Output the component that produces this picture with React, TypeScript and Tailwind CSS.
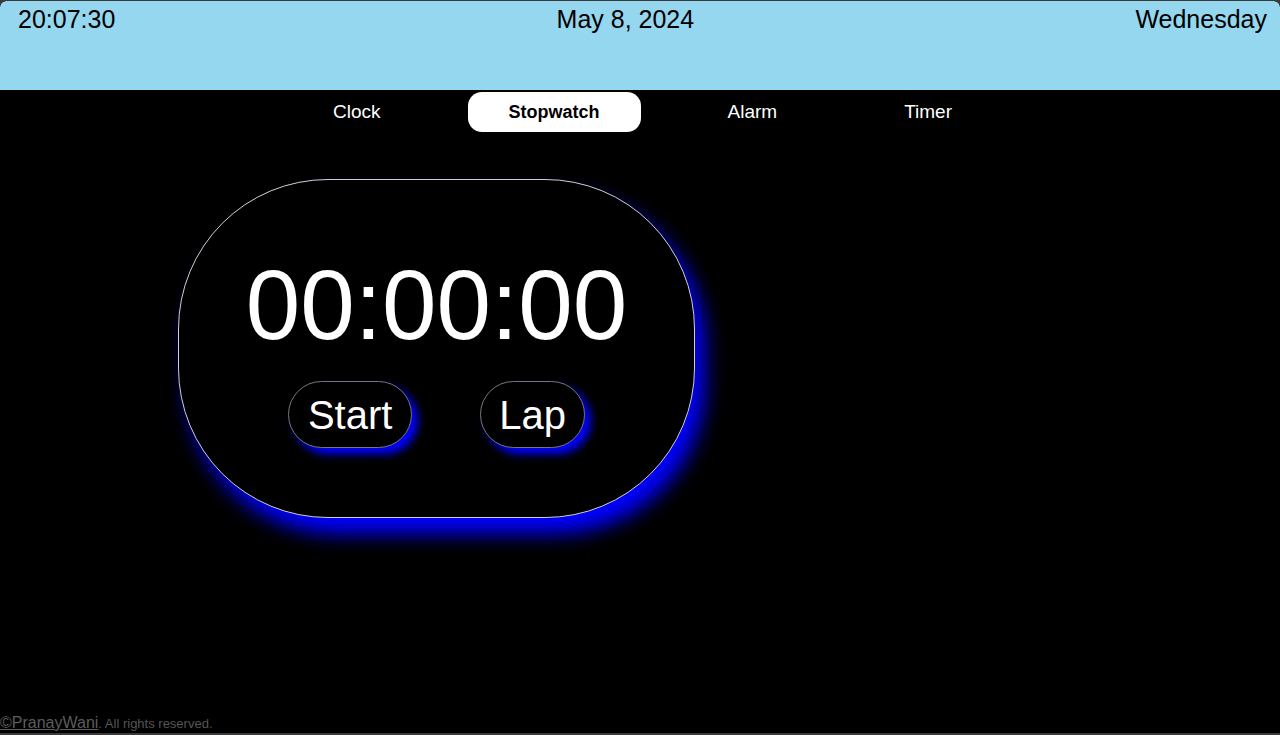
import React from 'react';

const tabs = ['Clock', 'Stopwatch', 'Alarm', 'Timer'];

export default function App() {
  const active = 'Stopwatch';

  return (
    <div className="h-[735px] bg-[#3a3a3a] pt-px font-['Liberation_Sans',Arial,sans-serif] overflow-hidden">
      <div className="h-[732px] bg-black flex flex-col rounded-t-[6px] overflow-hidden">
        {/* top bar */}
        <header className="h-[89px] shrink-0 bg-[#94d7ef] rounded-t-[6px] flex justify-between pl-[18px] pr-[13px] pt-[3px] text-[25px] text-black leading-[30px]">
          <span>20:07:30</span>
          <span>May 8, 2024</span>
          <span>Wednesday</span>
        </header>

        {/* tabs */}
        <nav className="flex justify-center gap-[47px] mt-[2px] ml-[5px]">
          {tabs.map((tab) =>
            tab === active ? (
              <div
                key={tab}
                className="h-[40px] px-[41px] rounded-[14px] bg-white text-black font-bold text-[18px] flex items-center"
              >
                {tab}
              </div>
            ) : (
              <div key={tab} className="h-[40px] px-[40px] text-white text-[19px] flex items-center">
                {tab}
              </div>
            )
          )}
        </nav>

        {/* stopwatch */}
        <main className="pl-[178px] pt-[47px]">
          <div className="w-[517px] h-[339px] rounded-[150px] border border-[#d0d0d0] bg-black shadow-[10px_16px_20px_#0000ff] flex flex-col items-center justify-center text-white">
            <div className="text-[98px] leading-[112px]">00:00:00</div>
            <div className="flex gap-[68px] mt-[20px]">
              <button className="h-[67px] px-[19px] rounded-full border border-[#777] bg-black text-[40px] text-white shadow-[6px_6px_9px_#0000ff]">
                Start
              </button>
              <button className="h-[67px] px-[18px] rounded-full border border-[#777] bg-black text-[40px] text-white shadow-[6px_6px_9px_#0000ff]">
                Lap
              </button>
            </div>
          </div>
        </main>

        <div className="flex-1" />

        <footer className="text-[13px] text-[#555] leading-[18px]">
          <a className="underline text-[16px] text-[#5c5c5c]">©PranayWani</a>. All rights reserved.
        </footer>
      </div>
      <div className="h-[2px] bg-[#3a3a3a]" />
    </div>
  );
}
